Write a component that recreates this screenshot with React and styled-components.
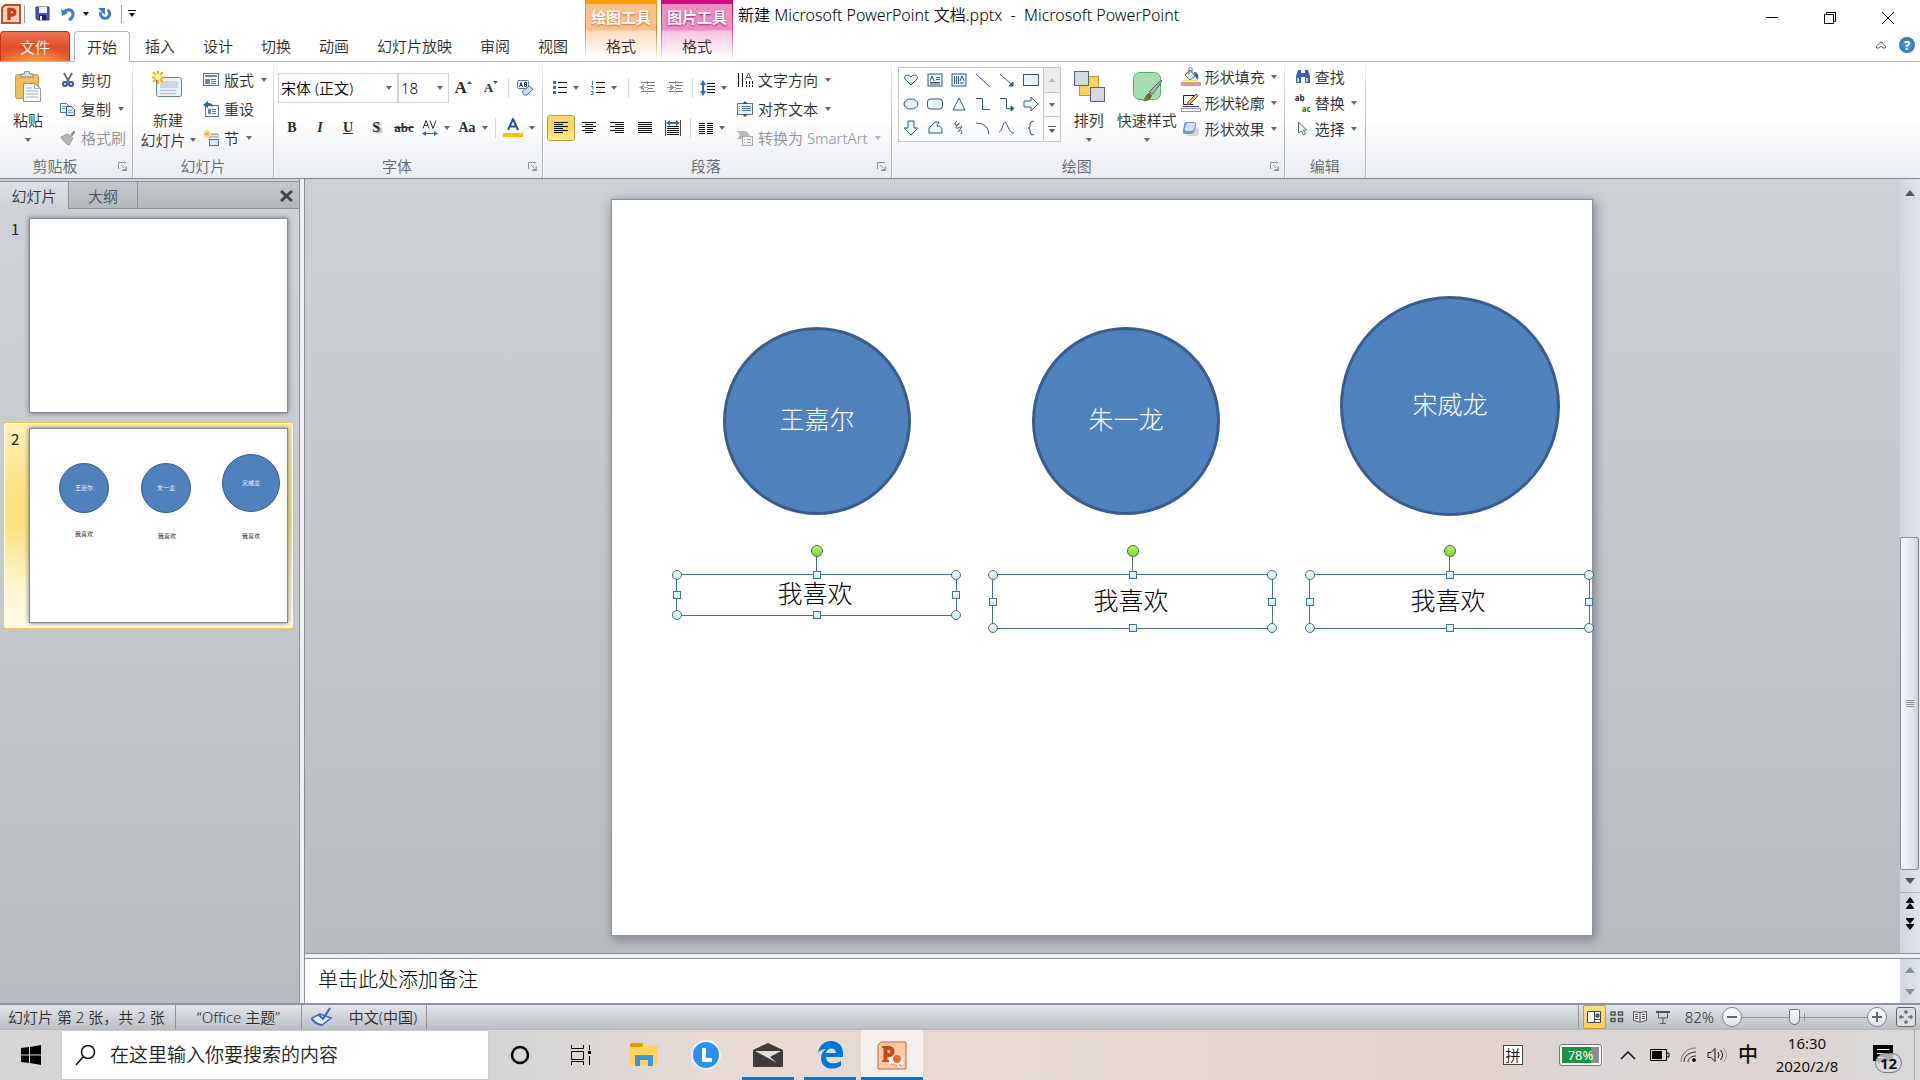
import React from 'react';
import styled, { createGlobalStyle, css } from 'styled-components';

const SHAPES = [
  { name: '王嘉尔', left: 111, top: 127, size: 188 },
  { name: '朱一龙', left: 420, top: 127, size: 188 },
  { name: '宋威龙', left: 728, top: 96, size: 220 },
];

const BOXES = [
  { text: '我喜欢', left: 64, top: 374, width: 281, height: 42 },
  { text: '我喜欢', left: 380, top: 374, width: 281, height: 55 },
  { text: '我喜欢', left: 697, top: 374, width: 281, height: 55 },
];

const HANDLES = [
  ['0%', '0%', true],
  ['50%', '0%', false],
  ['100%', '0%', true],
  ['0%', '50%', false],
  ['100%', '50%', false],
  ['0%', '100%', true],
  ['50%', '100%', false],
  ['100%', '100%', true],
];

function App() {
  return (
    <Page>
      <GlobalStyle />
      <Header />
      <Ribbon />
      <Workspace>
        <SlidePanel />
        <Editor />
      </Workspace>
      <StatusBar />
      <Taskbar />
    </Page>
  );
}

export default App;

/* ---------- header ---------- */

function Header() {
  return (
    <HeaderBar>
      <HeaderLeft>
        <QuickAccess>
          <svg width="20" height="20" viewBox="0 0 20 20">
            <path d="M4 1h15v18H1V4z" fill="#fbd3c2" stroke="#d24a1c" strokeWidth="2" />
            <path d="M8 16V5.500h3a2.500 2.500 0 0 1 0 5.500H8" fill="none" stroke="#c8400f" strokeWidth="3.500" />
          </svg>
          <QuickDivider />
          <QuickButton $w={28} aria-label="保存">
            <svg width="15" height="15" viewBox="0 0 15 15">
              <path d="M1 1h13v13H2.500L1 12.500z" fill="#4a50b8" stroke="#2f3590" />
              <rect x="4" y="1" width="8" height="6" fill="#f2f5ff" />
              <rect x="4" y="9" width="7" height="5" fill="#20245c" />
              <rect x="5" y="10" width="2" height="4" fill="#fff" />
            </svg>
          </QuickButton>
          <QuickButton $w={24} aria-label="撤消">
            <svg width="14" height="14" viewBox="0 0 14 14">
              <path d="M3 5c4-4 9-2 9 2 0 3-2 5-4 6" fill="none" stroke="#3d78cf" strokeWidth="3" />
              <path d="M0 2l1 7 6-3z" fill="#3d78cf" />
            </svg>
          </QuickButton>
          <QuickButton $w={12} aria-label="撤消列表">
            <Caret $dark />
          </QuickButton>
          <QuickButton $w={26} aria-label="重复">
            <svg width="14" height="14" viewBox="0 0 14 14">
              <path d="M9.500 3A4.500 4.500 0 1 1 3 5" fill="none" stroke="#3d78cf" strokeWidth="3" />
              <path d="M0 1h7v7z" fill="#3d78cf" />
            </svg>
          </QuickButton>
          <QuickDivider />
          <QuickButton $w={14} aria-label="自定义快速访问工具栏">
            <svg width="8" height="7" viewBox="0 0 8 7">
              <path d="M0 0h8v1H0zM1 3h6L4 7z" fill="#111" />
            </svg>
          </QuickButton>
        </QuickAccess>
        <Tabs>
          <FileTab>文件</FileTab>
          <Tab $active>开始</Tab>
          <Tab>插入</Tab>
          <Tab>设计</Tab>
          <Tab>切换</Tab>
          <Tab>动画</Tab>
          <Tab>幻灯片放映</Tab>
          <Tab>审阅</Tab>
          <Tab>视图</Tab>
        </Tabs>
      </HeaderLeft>
      <ContextGroup $main="#ff9c00" $edge="#e08a2c" $top="#fdc08c" $mid="#fedcc0">
        <ContextTitle $shadow="#c96a1c">绘图工具</ContextTitle>
        <ContextTab>格式</ContextTab>
      </ContextGroup>
      <ContextGroup $main="#cf0a80" $edge="#dc4fa4" $top="#ee8fc4" $mid="#f8c2e0">
        <ContextTitle $shadow="#b01c6c">图片工具</ContextTitle>
        <ContextTab>格式</ContextTab>
      </ContextGroup>
      <HeaderRight>
        <TitleRow>
          <Title>新建 Microsoft PowerPoint 文档.pptx&nbsp; -&nbsp; Microsoft PowerPoint</Title>
          <WindowButton aria-label="最小化">
            <svg width="12" height="12" viewBox="0 0 12 12">
              <path d="M0 5.500h12" stroke="#000" />
            </svg>
          </WindowButton>
          <WindowButton aria-label="还原">
            <svg width="12" height="12" viewBox="0 0 12 12" fill="none" stroke="#000">
              <path d="M.5 2.500h9v9h-9zM2.500 2.500v-2h9v9h-2" />
            </svg>
          </WindowButton>
          <WindowButton aria-label="关闭">
            <svg width="12" height="12" viewBox="0 0 12 12" stroke="#000">
              <path d="M0 0l12 12M12 0L0 12" />
            </svg>
          </WindowButton>
        </TitleRow>
        <HelpRow>
          <BareButton aria-label="功能区最小化">
            <svg width="10" height="8" viewBox="0 0 10 8" fill="#fff" stroke="#555a60">
              <path d="M.5 5L5 .7 9.500 5v2H7L5 5 3 7H.5z" />
            </svg>
          </BareButton>
          <HelpButton aria-label="帮助">?</HelpButton>
        </HelpRow>
      </HeaderRight>
    </HeaderBar>
  );
}

/* ---------- ribbon ---------- */

function Lines({ rows, x = 0, color = '#111' }) {
  return rows.map(([x1, x2, y]) => (
    <path key={y} d={`M${x + x1} ${y + 0.5}H${x + x2}`} stroke={color} />
  ));
}

function AlignIcon({ starts, ends }) {
  return (
    <svg width="15" height="13" viewBox="0 0 15 13">
      <Lines rows={[0, 2, 4, 6, 8, 10].map((y, i) => [starts[i % 2], ends[i % 2], y])} />
    </svg>
  );
}

function IndentIcon({ right }) {
  return (
    <svg width="16" height="14" viewBox="0 0 16 14">
      <Lines rows={[[2, 16, 1], [9, 16, 4], [9, 14, 7], [2, 16, 10]]} color="#777" />
      <path d={right ? 'M3 3l5 3.500L3 10zM0 6h4v1H0z' : 'M5 3L0 6.500 5 10zM4 6h4v1H4z'} fill="#a0a0a0" />
      <path d="M8.500 0v14" stroke="#888" strokeDasharray="1 1" />
    </svg>
  );
}

function SmallCommand({ icon, label, caret, disabled, tall }) {
  return (
    <CommandButton $tall={tall} disabled={disabled}>
      {icon}
      {label}
      {caret && <Caret $faint={disabled} />}
    </CommandButton>
  );
}

function Launcher() {
  return (
    <LauncherButton aria-label="更多选项">
      <svg width="9" height="9" viewBox="0 0 9 9" fill="none" stroke="#8c9096">
        <path d="M.5 7V.5H8M3 3l3 3" />
        <path d="M4 8.500h5V4M5 7.500h3V5" />
      </svg>
    </LauncherButton>
  );
}

function Ribbon() {
  return (
    <RibbonBar>
      <Group>
        <GroupBody>
          <LargeButton $w={56}>
            <svg width="26" height="32" viewBox="0 0 26 32">
              <rect x=".5" y="3.500" width="23" height="24" rx="2" fill="#f0bd5c" stroke="#cf9a3b" />
              <path d="M6 6V3h3a3 3 0 0 1 6 0h3v3z" fill="#d9dce2" stroke="#80858c" />
              <path d="M8.500 12.500h11l6 5v13h-17z" fill="#fafcff" stroke="#8095b5" />
              <path d="M19.500 12.500v5h6M11 17h6M11 20h12M11 23h12M11 26h12" fill="none" stroke="#9fb0cc" />
            </svg>
            <span>粘贴</span>
            <LineCaret><Caret /></LineCaret>
          </LargeButton>
          <Column $pad>
            <SmallCommand
              tall
              label="剪切"
              icon={
                <svg width="16" height="16" viewBox="0 0 16 16" fill="none">
                  <path d="M4 1l5 9M12 1L7 10" stroke="#66748a" strokeWidth="2" />
                  <circle cx="5" cy="12" r="2" stroke="#2b59a8" strokeWidth="2" />
                  <circle cx="11" cy="12" r="2" stroke="#2b59a8" strokeWidth="2" />
                </svg>
              }
            />
            <SmallCommand
              tall
              caret
              label="复制"
              icon={
                <svg width="16" height="16" viewBox="0 0 16 16">
                  <path d="M.5 2.500h6l3 3v6h-9z" fill="#fff" stroke="#4a74b8" />
                  <path d="M6.500 5.500h5l3 3v6h-8z" fill="#dfeafc" stroke="#2e5ca8" />
                  <path d="M2 5.500h4M2 7.500h4M8 9.500h4M8 11.500h5" stroke="#7f9fd0" />
                </svg>
              }
            />
            <SmallCommand
              tall
              disabled
              label="格式刷"
              icon={
                <svg width="16" height="16" viewBox="0 0 16 16">
                  <path d="M11 4l3-3 1 1-3 4z" fill="#8b8b8b" stroke="#8b8b8b" />
                  <path d="M1 7l7-3 5 4-4 7c-3-1-6-4-8-8z" fill="#b4b4b4" stroke="#9a9a9a" />
                </svg>
              }
            />
          </Column>
        </GroupBody>
        <GroupLabel $launcher>剪贴板<Launcher /></GroupLabel>
      </Group>

      <Group>
        <GroupBody $pad={4}>
          <LargeButton $w={62}>
            <svg width="32" height="32" viewBox="0 0 32 32">
              <rect x="4.500" y="6.500" width="25" height="19" rx="2" fill="#edf2f9" stroke="#6b7d9c" />
              <rect x="8" y="10" width="18" height="7" fill="#cfd6e2" />
              <path d="M8 19.500h18M8 22.500h18" stroke="#a9b8d2" strokeDasharray="16 2" />
              <path d="M6 0v13M0 6.500h13M1 1l10 10M11 1L1 11" stroke="#f0b400" strokeWidth="2" />
              <circle cx="6" cy="6" r="3" fill="#fff6a8" />
            </svg>
            <span>新建</span>
            <LineCaret>幻灯片<Caret /></LineCaret>
          </LargeButton>
          <Column $pad>
            <SmallCommand
              tall
              caret
              label="版式"
              icon={
                <svg width="16" height="16" viewBox="0 0 16 16">
                  <rect x=".5" y="1.500" width="15" height="12" fill="#f4f7fc" stroke="#60718e" />
                  <path d="M2 3h12v2H2zM2 7h5v5H2z" fill="#6f87b0" />
                  <path d="M8 7.500h5M8 9.500h5M8 11.500h5" stroke="#60718e" />
                </svg>
              }
            />
            <SmallCommand
              tall
              label="重设"
              icon={
                <svg width="16" height="16" viewBox="0 0 16 16">
                  <rect x="2.500" y="4.500" width="13" height="11" fill="#f4f7fc" stroke="#60718e" />
                  <path d="M5 8h3v5H5z" fill="#6f87b0" />
                  <path d="M9 8.500h4M9 10.500h4M9 12.500h4" stroke="#60718e" />
                  <path d="M0 4l5-4v2c4 0 5 2 5 4-2-2-3-1-5-1v2z" fill="#2f62bd" />
                </svg>
              }
            />
            <SmallCommand
              tall
              caret
              label="节"
              icon={
                <svg width="16" height="16" viewBox="0 0 16 16">
                  <path d="M8 4h7v3H6" fill="#dfe3ea" stroke="#8b95a5" />
                  <rect x="6.500" y="9.500" width="9" height="6" fill="#d9e4f5" stroke="#60718e" />
                  <path d="M4 0v8M0 4h8M1 1l6 6M7 1L1 7" stroke="#f0b400" />
                </svg>
              }
            />
          </Column>
        </GroupBody>
        <GroupLabel>幻灯片</GroupLabel>
      </Group>

      <Group>
        <ToolRows>
          <ToolRow>
            <Combo $w={120}>
              <select aria-label="字体" defaultValue="宋体 (正文)">
                <option>宋体 (正文)</option>
              </select>
              <Caret />
            </Combo>
            <Combo $w={51}>
              <select aria-label="字号" defaultValue="18">
                <option>18</option>
              </select>
              <Caret />
            </Combo>
            <Tool $size={17} aria-label="增大字号">
              A
              <svg width="5" height="14" viewBox="0 0 5 14"><path d="M0 3l2.500-3L5 3z" fill="#2c5aa8" /></svg>
            </Tool>
            <Tool $size={13} aria-label="减小字号">
              A
              <svg width="5" height="14" viewBox="0 0 5 14"><path d="M0 0l2.500 3L5 0z" fill="#2c5aa8" /></svg>
            </Tool>
            <Divider />
            <Tool aria-label="清除格式">
              <svg width="17" height="16" viewBox="0 0 17 16">
                <rect x=".5" y=".5" width="11" height="8" rx="1" fill="#fff" stroke="#5873a3" />
                <path d="M2.500 7L4 2.500 5.500 7M3 5.500h2M7.500 2.500v4h2v-2h-2 2v-2z" fill="none" stroke="#333" />
                <path d="M5 12l7-6 4 3-6 6H7z" fill="#cfdcf0" stroke="#5873a3" />
              </svg>
            </Tool>
          </ToolRow>
          <ToolRow>
            <Tool $size={14}><b>B</b></Tool>
            <Tool $size={14}><i>I</i></Tool>
            <Tool $size={14}><u>U</u></Tool>
            <Tool $size={14}><Shadowed>S</Shadowed></Tool>
            <Tool $size={13}><s>abc</s></Tool>
            <Tool $w={36} aria-label="字符间距">
              <svg width="16" height="17" viewBox="0 0 16 17">
                <path d="M1 8.500l3-8 3 8M2 5.500h4M8 .5l3 8 3-8" fill="none" stroke="#333" />
                <path d="M0 13.500L4 11v2h8v-2l4 2.500-4 2.500v-2H4v2z" fill="#3367b8" />
              </svg>
              <Caret />
            </Tool>
            <Tool $w={38} $size={14}>Aa<Caret /></Tool>
            <Divider />
            <Tool $w={42} aria-label="字体颜色">
              <svg width="20" height="20" viewBox="0 0 20 20">
                <path d="M5 12L10 1l5 11M7 8.500h6" fill="none" stroke="#2c4d90" strokeWidth="2" />
                <rect y="15" width="20" height="4" fill="#ffc000" />
              </svg>
              <Caret />
            </Tool>
          </ToolRow>
        </ToolRows>
        <GroupLabel $launcher>字体<Launcher /></GroupLabel>
      </Group>

      <Group>
        <GroupBody $end={4}>
          <ToolRows>
            <ToolRow>
              <Tool $w={38} aria-label="项目符号">
                <svg width="14" height="14" viewBox="0 0 14 14">
                  <Lines rows={[[5, 14, 1], [5, 14, 6], [5, 14, 11]]} />
                  <path d="M0 0h3v3H0zM0 5h3v3H0zM0 10h3v3H0z" fill="#3a68b5" />
                </svg>
                <Caret />
              </Tool>
              <Tool $w={38} aria-label="编号">
                <svg width="14" height="14" viewBox="0 0 14 14">
                  <Lines rows={[[5, 14, 1], [5, 14, 6], [5, 14, 11]]} />
                  <path d="M1.500 0v4M0 5.500h2v3M0 10.500h2v3H0" fill="none" stroke="#3a68b5" />
                </svg>
                <Caret />
              </Tool>
              <Divider $w={10} />
              <Tool aria-label="减少缩进量"><IndentIcon /></Tool>
              <Tool aria-label="增加缩进量"><IndentIcon right /></Tool>
              <Divider />
              <Tool $w={36} aria-label="行距">
                <svg width="15" height="16" viewBox="0 0 15 16">
                  <Lines rows={[[7, 15, 3], [7, 15, 6], [7, 15, 9], [7, 15, 12]]} />
                  <path d="M0 5l3-5 3 5H4v6h2l-3 5-3-5h2V5z" fill="#3a68b5" />
                </svg>
                <Caret />
              </Tool>
            </ToolRow>
            <ToolRow>
              <Tool $active aria-label="左对齐"><AlignIcon starts={[0, 0]} ends={[14, 9]} /></Tool>
              <Tool aria-label="居中"><AlignIcon starts={[0, 3]} ends={[14, 11]} /></Tool>
              <Tool aria-label="右对齐"><AlignIcon starts={[0, 5]} ends={[14, 14]} /></Tool>
              <Tool aria-label="两端对齐"><AlignIcon starts={[0, 0]} ends={[14, 14]} /></Tool>
              <Tool aria-label="分散对齐">
                <svg width="16" height="16" viewBox="0 0 16 16">
                  <path d="M.5 0v16M15.500 0v16" stroke="#444" />
                  <path d="M1 3l4-3v2h6V0l4 3-4 3V4H5v2z" fill="#3a68b5" />
                  <Lines rows={[[2, 14, 6], [2, 14, 8], [2, 14, 10], [2, 14, 12], [2, 14, 14]]} />
                </svg>
              </Tool>
              <Divider />
              <Tool $w={38} aria-label="分栏">
                <svg width="14" height="11" viewBox="0 0 14 11">
                  <Lines rows={[[0, 6, 0], [0, 6, 2], [0, 6, 4], [0, 6, 6], [0, 6, 8], [0, 6, 10]]} />
                  <Lines x={8} rows={[[0, 6, 0], [0, 6, 2], [0, 6, 4], [0, 6, 6], [0, 6, 8], [0, 6, 10]]} />
                </svg>
                <Caret />
              </Tool>
            </ToolRow>
          </ToolRows>
          <Column $pad>
            <SmallCommand
              tall
              caret
              label="文字方向"
              icon={
                <svg width="16" height="16" viewBox="0 0 16 16">
                  <path d="M1.500 1v14M5.500 1v14" stroke="#111" />
                  <path d="M9.500 9v6M12.500 9v6M15.500 9v6" stroke="#111" strokeDasharray="3 1" />
                  <path d="M8.500 7.500L11.500 1l3 6.500M9.500 5.500h4" fill="none" stroke="#2c4d90" />
                </svg>
              }
            />
            <SmallCommand
              tall
              caret
              label="对齐文本"
              icon={
                <svg width="16" height="16" viewBox="0 0 16 16">
                  <rect x=".5" y="2.500" width="15" height="11" fill="#e8f0fc" stroke="#5873a3" />
                  <path d="M2 5.500h1M5 5.500h9M2 7.500h1M5 7.500h9M2 9.500h1M5 9.500h9" stroke="#5873a3" />
                  <path d="M5 3l3-3 3 3zM5 13l3 3 3-3z" fill="#2456ab" />
                </svg>
              }
            />
            <SmallCommand
              tall
              caret
              disabled
              label="转换为 SmartArt"
              icon={
                <svg width="16" height="16" viewBox="0 0 16 16">
                  <path d="M0 1h9l4 4-4 4H0l3-4z" fill="#b9b9b9" />
                  <rect x="5.500" y="6.500" width="10" height="9" fill="#f3f3f3" stroke="#a5a5a5" />
                  <path d="M7 9.500h1M10 9.500h4M7 12.500h1M10 12.500h4" stroke="#a5a5a5" />
                </svg>
              }
            />
          </Column>
        </GroupBody>
        <GroupLabel $launcher>段落<Launcher /></GroupLabel>
      </Group>

      <Group>
        <GroupBody $pad={6} $end={1}>
          <Gallery>
            <GalleryGrid>
              {GALLERY.map((shape, i) => (
                <BareButton key={i} aria-label={`形状 ${i + 1}`}>
                  <svg width="16" height="16" viewBox="0 0 16 16" fill="#e9f4fc" stroke="#33567f">
                    {shape}
                  </svg>
                </BareButton>
              ))}
            </GalleryGrid>
            <GalleryScroll>
              <GalleryButton $off aria-label="上一行"><Caret $up $faint /></GalleryButton>
              <GalleryButton aria-label="下一行"><Caret /></GalleryButton>
              <GalleryButton aria-label="其他">
                <svg width="8" height="7" viewBox="0 0 8 7"><path d="M0 0h8v1H0zM1 3h6L4 7z" fill="#555" /></svg>
              </GalleryButton>
            </GalleryScroll>
          </Gallery>
          <LargeButton $w={56}>
            <svg width="32" height="32" viewBox="0 0 32 32">
              <rect x="6.500" y="5.500" width="19" height="19" fill="#f7d560" stroke="#c09c2e" />
              <rect x="1.500" y=".5" width="14" height="14" fill="#d5dae2" stroke="#59616e" />
              <rect x="17.500" y="16.500" width="14" height="14" fill="#d5dae2" stroke="#59616e" />
            </svg>
            <span>排列</span>
            <LineCaret><Caret /></LineCaret>
          </LargeButton>
          <LargeButton $w={60}>
            <svg width="32" height="32" viewBox="0 0 32 32">
              <rect x="2.500" y="1.500" width="27" height="27" rx="6" fill="#a5dfb0" stroke="#4fae68" />
              <path d="M31 10l-9 13-4-2L30 9z" fill="#aab0b8" stroke="#666" />
              <path d="M21 24c-1 5-5 7-9 6 2-2 2-6 6-8z" fill="#7a5a35" />
              <path d="M12 30c2-1 3-3 4-5l2 4z" fill="#3c9a3c" />
            </svg>
            <span>快速样式</span>
            <LineCaret><Caret /></LineCaret>
          </LargeButton>
          <Column>
            <SmallCommand
              caret
              label="形状填充"
              icon={
                <svg width="20" height="20" viewBox="0 0 20 20">
                  <path d="M4 8l5-5 5 6-5 4z" fill="#dbe6f5" stroke="#45618e" />
                  <path d="M8 7V2c0-2 3-2 3 0v3" fill="none" stroke="#45618e" />
                  <path d="M13 5c4 0 5 4 4 8l-3-4z" fill="#2d5dae" />
                  <path d="M2 13.500h15" stroke="#f5ea3a" />
                  <rect y="15" width="20" height="4" fill="#dc9a98" />
                </svg>
              }
            />
            <SmallCommand
              caret
              label="形状轮廓"
              icon={
                <svg width="20" height="20" viewBox="0 0 20 20">
                  <path d="M13 2.500H2.500v9h10" fill="none" stroke="#222" />
                  <path d="M7 9l8-8 2 2-8 8-3 1z" fill="#eab66a" stroke="#7a4a2a" />
                  <path d="M2 13.500h16" stroke="#3434c8" />
                  <rect x=".5" y="15.500" width="19" height="3" fill="#fff" stroke="#999" />
                </svg>
              }
            />
            <SmallCommand
              caret
              label="形状效果"
              icon={
                <svg width="20" height="20" viewBox="0 0 20 20">
                  <rect x="5" y="8" width="13" height="9" rx="3" fill="#d5d5d5" />
                  <path d="M5 3h8q3 0 2 4l-2 6q-1 2-3 2H4q-3 0-2-4l1-5q0-3 2-3z" fill="#6f95d4" />
                  <path d="M6 4h7q2 0 1 2l-1 4q-1 2-3 2H6q-3 0-2-3z" fill="#d3e2f8" />
                </svg>
              }
            />
          </Column>
        </GroupBody>
        <GroupLabel $launcher>绘图<Launcher /></GroupLabel>
      </Group>

      <Group>
        <GroupBody $pad={6} $end={2}>
          <Column>
            <SmallCommand
              label="查找"
              icon={
                <svg width="16" height="16" viewBox="0 0 16 16">
                  <path d="M3 1h3v3h4V1h3l2 6v7h-5V8H6v6H1V7z" fill="#3a62a8" />
                  <path d="M2 9h2v4H2zM11 9h2v4h-2z" fill="#c5d6f0" />
                </svg>
              }
            />
            <SmallCommand caret label="替换" icon={<ReplaceIcon><span>ab</span><em>ac</em></ReplaceIcon>} />
            <SmallCommand
              caret
              label="选择"
              icon={
                <svg width="16" height="16" viewBox="0 0 16 16">
                  <path d="M3.500 1v11l3-2 2 4 2-1-2-4h3z" fill="#f3f7fc" stroke="#54698c" />
                </svg>
              }
            />
          </Column>
        </GroupBody>
        <GroupLabel>编辑</GroupLabel>
      </Group>
    </RibbonBar>
  );
}

const GALLERY = [
  <path d="M8 13L2 7c-2-3 3-6 6-2 3-4 8-1 6 2z" />,
  <g><rect x="1" y="2" width="14" height="12" /><path d="M3 9l2-5 2 5M9 5.500h4M9 7.500h4M3 10.500h10M3 12h10" fill="none" /></g>,
  <g><rect x="1" y="2" width="14" height="12" /><path d="M9 9l2-5 2 5M3.500 4v8M5.500 4v8M7.500 4v8M10 10v2M12 10v2" fill="none" /></g>,
  <path d="M1 2l14 13" fill="none" />,
  <g><path d="M1 2l12 11" fill="none" /><path d="M14 10v4h-4z" fill="#33567f" /></g>,
  <rect x=".5" y="2.500" width="15" height="11" />,
  <ellipse cx="8" cy="8" rx="7" ry="5" />,
  <rect x=".5" y="3" width="15" height="10" rx="3" />,
  <path d="M8 2l6 12H2z" />,
  <path d="M1 2.500h6.500v11H15" fill="none" />,
  <g><path d="M1 2.500h6.500v10H12" fill="none" /><path d="M12 10l3 2.500-3 2.500z" fill="#33567f" /></g>,
  <path d="M1 5h7V1l7 7-7 7v-4H1z" />,
  <path d="M5 1h6v7h4l-7 7-7-7h4z" />,
  <path d="M2 13V8l6-6h4l-2 4q5 0 5 4v3z" />,
  <path d="M6 1C3 3 3 6 6 5s3-3 1-1-3 5 0 4 5-3 3 0-4 4-2 3 4 0 2 3" fill="none" />,
  <path d="M1 3q12 0 13 11" fill="none" />,
  <path d="M0 12C3 12 4 2 6 2s4 12 9 11" fill="none" />,
  <path d="M11 1q-4 0-4 3v2q0 2-2 2 2 0 2 2v2q0 3 4 3" fill="none" />,
];

/* ---------- slides ---------- */

function SlideContent({ scale = 1, selected }) {
  const px = (n) => `${Math.round(n * scale)}px`;
  return (
    <>
      {SHAPES.map((s) => (
        <Circle
          key={s.name}
          $thin={scale < 1}
          style={{ left: px(s.left), top: px(s.top), width: px(s.size), height: px(s.size) }}
        >
          {s.name}
        </Circle>
      ))}
      {BOXES.map((b) => (
        <TextBox
          key={b.left}
          $selected={selected}
          style={{ left: px(b.left), top: px(b.top), width: px(b.width), height: px(b.height) }}
        >
          {b.text}
          {selected && <RotateHandle />}
          {selected && HANDLES.map(([x, y, round]) => <Handle key={x + y} $x={x} $y={y} $round={round} />)}
        </TextBox>
      ))}
    </>
  );
}

function SlidePanel() {
  return (
    <Panel>
      <PanelTabs>
        <PanelTab $active>幻灯片</PanelTab>
        <PanelTab>大纲</PanelTab>
        <PanelClose aria-label="关闭">
          <svg width="13" height="12" viewBox="0 0 13 12" stroke="#444" strokeWidth="3">
            <path d="M1 1l11 10M12 1L1 11" />
          </svg>
        </PanelClose>
      </PanelTabs>
      <ThumbList>
        <ThumbItem>
          <ThumbNumber>1</ThumbNumber>
          <Thumb />
        </ThumbItem>
        <ThumbItem $selected>
          <ThumbNumber>2</ThumbNumber>
          <Thumb>
            <SlideContent scale={0.264} />
          </Thumb>
        </ThumbItem>
      </ThumbList>
    </Panel>
  );
}

function Editor() {
  return (
    <EditorColumn>
      <CanvasRow>
        <Canvas>
          <Slide>
            <SlideContent selected />
          </Slide>
        </Canvas>
        <ScrollBar>
          <ScrollButton aria-label="向上滚动"><Triangle $up $color="#555" /></ScrollButton>
          <ScrollTrack>
            <ScrollThumb />
          </ScrollTrack>
          <ScrollButton aria-label="向下滚动"><Triangle $color="#555" /></ScrollButton>
          <SlideJump>
            <BareButton aria-label="上一张幻灯片">
              <svg width="10" height="13" viewBox="0 0 10 13"><path d="M1 5l4-5 4 5v1H1zM1 11l4-5 4 5v1H1z" /></svg>
            </BareButton>
            <BareButton aria-label="下一张幻灯片">
              <svg width="10" height="13" viewBox="0 0 10 13"><path d="M1 1h8v1L5 7 1 2zM1 7h8v1l-4 5-4-5z" /></svg>
            </BareButton>
          </SlideJump>
        </ScrollBar>
      </CanvasRow>
      <NotesRow>
        <Notes aria-label="备注" placeholder="单击此处添加备注" />
        <ScrollBar $short>
          <ScrollButton aria-label="备注向上滚动"><Triangle $up $color="#87938f" /></ScrollButton>
          <ScrollButton aria-label="备注向下滚动"><Triangle $color="#87938f" /></ScrollButton>
        </ScrollBar>
      </NotesRow>
    </EditorColumn>
  );
}

/* ---------- status bar ---------- */

function StatusBar() {
  return (
    <Status>
      <StatusItem $w={176}>幻灯片 第 2 张，共 2 张</StatusItem>
      <StatusItem $w={126} $center>“Office 主题”</StatusItem>
      <StatusItem $w={125} $center>
        <svg width="22" height="20" viewBox="0 0 22 20">
          <path d="M1 11l8-4 11 4-9 7q-5 0-10-5z" fill="#e6eefc" stroke="#3b69b8" strokeWidth="1.500" />
          <path d="M1 12q4 5 10 6" fill="none" stroke="#3b69b8" strokeWidth="2" />
          <path d="M8 8l4 4 7-11" fill="none" stroke="#3560c0" strokeWidth="2" />
        </svg>
        中文(中国)
      </StatusItem>
      <Spacer />
      <ViewButtons>
        <ViewButton $active aria-label="普通视图">
          <svg width="14" height="12" viewBox="0 0 14 12" fill="#fff" stroke="#444">
            <path d="M.5.5h13v11H.5zM7.500 0v12M7.500 8.500h6" />
            <path d="M9 3h3v3H9z" fill="#666" />
          </svg>
        </ViewButton>
        <ViewButton aria-label="幻灯片浏览">
          <svg width="14" height="12" viewBox="0 0 14 12" fill="none" stroke="#555" strokeWidth="1.500">
            <path d="M1 1h4v3H1zM8.500 1h4v3h-4zM1 7.500h4v3H1zM8.500 7.500h4v3h-4z" />
          </svg>
        </ViewButton>
        <ViewButton aria-label="阅读视图">
          <svg width="14" height="12" viewBox="0 0 14 12" fill="#eee" stroke="#555">
            <path d="M7 1.500L.5.5v9L7 11l6.500-1.500v-9L7 1.500V11" />
            <path d="M2 3.500h3M2 5.500h3M2 7.500h3M9 3.500h3M9 5.500h3M9 7.500h3" />
          </svg>
        </ViewButton>
        <ViewButton aria-label="幻灯片放映">
          <svg width="14" height="13" viewBox="0 0 14 13" fill="none" stroke="#555">
            <path d="M0 1h14" strokeWidth="2" />
            <path d="M2.500 2v5h9V2M7 7v5M4 12.500h6" />
          </svg>
        </ViewButton>
      </ViewButtons>
      <ZoomLabel>82%</ZoomLabel>
      <RoundButton aria-label="缩小">
        <svg width="10" height="10" viewBox="0 0 10 10"><path d="M0 5h10" stroke="#666" strokeWidth="2" /></svg>
      </RoundButton>
      <ZoomSlider type="range" aria-label="显示比例" min="0" max="100" defaultValue="41" />
      <RoundButton aria-label="放大">
        <svg width="10" height="10" viewBox="0 0 10 10"><path d="M0 5h10M5 0v10" stroke="#666" strokeWidth="2" /></svg>
      </RoundButton>
      <FitButton aria-label="适应窗口">
        <svg width="16" height="16" viewBox="0 0 16 16" fill="none" stroke="#444">
          <path d="M8 1v4M6 3h4M8 11v4M6 13h4M1 8h5M3 6v4M10 8h5M13 6v4" />
        </svg>
      </FitButton>
    </Status>
  );
}

/* ---------- taskbar ---------- */

function Taskbar() {
  return (
    <TaskbarRow>
      <StartButton aria-label="开始">
        <svg width="20" height="20" viewBox="0 0 20 20">
          <path d="M0 3l8-1v7.500H0zM9 2l11-2v9.500H9zM0 10.500h8V18l-8-1zM9 10.500h11V20L9 18z" />
        </svg>
      </StartButton>
      <SearchBox htmlFor="search">
        <svg width="22" height="22" viewBox="0 0 22 22" fill="none" stroke="#111" strokeWidth="1.500">
          <circle cx="13" cy="8" r="6.500" />
          <path d="M8 13l-7 8" />
        </svg>
        <input id="search" type="text" aria-label="搜索" placeholder="在这里输入你要搜索的内容" />
      </SearchBox>
      <TaskButton aria-label="Cortana">
        <svg width="20" height="20" viewBox="0 0 20 20" fill="none" stroke="#000" strokeWidth="2.500">
          <circle cx="10" cy="10" r="8" />
        </svg>
      </TaskButton>
      <TaskButton aria-label="任务视图">
        <svg width="24" height="20" viewBox="0 0 24 20" fill="none" stroke="#000">
          <path d="M1.500 0v3.500h12V0M1.500 6.500h12v8h-12zM1.500 20v-3.500h12V20M19.500 0v5M19.500 11v9" />
          <path d="M18 6h3v3h-3z" fill="#000" stroke="none" />
        </svg>
      </TaskButton>
      <TaskButton aria-label="文件资源管理器">
        <svg width="28" height="24" viewBox="0 0 28 24">
          <path d="M0 2q0-2 2-2h10q2 0 2 2h12q2 0 2 2v18H0z" fill="#ffd25c" />
          <path d="M0 2q0-2 2-2h10q1 0 1 2t-3 2H0z" fill="#e0a000" />
          <path d="M5 23V12h18v11h-5v-6h-8v6z" fill="#3a96dd" />
        </svg>
      </TaskButton>
      <TaskButton aria-label="时钟">
        <svg width="30" height="30" viewBox="0 0 30 30">
          <circle cx="15" cy="15" r="14" fill="#2b91ee" stroke="#e8f2fb" strokeWidth="2" />
          <path d="M13 8v12h8" fill="none" stroke="#fff" strokeWidth="4" />
        </svg>
      </TaskButton>
      <TaskButton $open aria-label="邮件">
        <svg width="30" height="24" viewBox="0 0 30 24">
          <path d="M0 7l15-7 15 7v17H0z" fill="#3f3b3a" />
          <path d="M2 8h26l-11 6 7 6-9-5z" fill="#e8dcd6" />
        </svg>
      </TaskButton>
      <TaskButton $open aria-label="Microsoft Edge">
        <svg width="26" height="28" viewBox="0 0 26 28">
          <path
            d="M1 12C2 4 8 0 14 0c8 0 12 6 12 12v4H9c0 7 9 8 15 4v5c-8 5-20 3-20-8 0-4 2-7 5-9-4 0-7 2-8 4zm8 0h10c0-6-9-6-10 0z"
            fill="#0078d7"
            fillRule="evenodd"
          />
        </svg>
      </TaskButton>
      <TaskButton $open $active aria-label="PowerPoint">
        <svg width="30" height="29" viewBox="0 0 30 29">
          <path d="M4 1h24q1 0 1 1v25q0 1-1 1H2q-1 0-1-1V4z" fill="#fbc9a8" stroke="#c9622f" />
          <path d="M13 14l15 2-3 11-14-4z" fill="#fff" stroke="#f3d3c3" />
          <circle cx="20" cy="18" r="4" fill="#ee6c33" />
          <path d="M14 23l6 2M22 24l3 1" stroke="#f0a27c" strokeWidth="2" />
          <path d="M8.500 20V7H12a3.500 3.500 0 0 1 0 7H8.500" fill="none" stroke="#c8480f" strokeWidth="4" />
          <path d="M5 6h4M5 20h7" stroke="#c8480f" strokeWidth="2" />
        </svg>
      </TaskButton>
      <Spacer />
      <Tray>
        <ImeMode aria-label="拼音">拼</ImeMode>
        <BatteryGauge>
          <BatteryLevel>78%</BatteryLevel>
        </BatteryGauge>
        <BareButton aria-label="显示隐藏的图标">
          <svg width="20" height="10" viewBox="0 0 20 10" fill="none" stroke="#111" strokeWidth="1.500"><path d="M1 9l7-7 7 7" /></svg>
        </BareButton>
        <BareButton aria-label="电池">
          <svg width="20" height="12" viewBox="0 0 20 12">
            <path d="M.5.5h16v11H.5zM17 4h2v4h-2" fill="none" stroke="#000" />
            <rect x="2" y="2" width="10" height="8" />
          </svg>
        </BareButton>
        <BareButton aria-label="网络">
          <svg width="17" height="16" viewBox="0 0 17 16" fill="none" stroke="#222">
            <path d="M1 15C1 7 7 1 16 1" stroke="#777" />
            <path d="M4 15C4 9 9 5 16 5M8 15c0-4 4-6 8-6" />
            <circle cx="14" cy="13" r="1.500" fill="#000" />
          </svg>
        </BareButton>
        <BareButton aria-label="音量">
          <svg width="21" height="16" viewBox="0 0 21 16" fill="none" stroke="#111">
            <path d="M1 5.500h3l4-4v13l-4-4H1zM11 5q2 3 0 6M13.500 3q4 5 0 10" />
            <path d="M16.500 1q6 7 0 14" stroke="#999" />
          </svg>
        </BareButton>
        <ImeButton>中</ImeButton>
        <Clock>
          <span>16:30</span>
          <span>2020/2/8</span>
        </Clock>
        <Notifications aria-label="通知">
          <svg width="20" height="20" viewBox="0 0 20 20">
            <path d="M0 0h20v16H8l-3 3v-3H0z" />
            <path d="M4 4.500h12M4 8.500h12M4 12.500h6" stroke="#fff" />
          </svg>
          <Badge>12</Badge>
        </Notifications>
        <ShowDesktop aria-label="显示桌面" />
      </Tray>
    </TaskbarRow>
  );
}

/* ---------- styles ---------- */

const GlobalStyle = createGlobalStyle`
  * {
    box-sizing: border-box;
  }

  body {
    margin: 0;
    font-family: 'Noto Sans', 'Noto Sans CJK SC', sans-serif;
    font-size: 15px;
    font-weight: 350;
    line-height: 20px;
    color: #2b2b2b;
    background: #fff;
  }

  button, input, select, textarea {
    font: inherit;
    color: inherit;
  }

  svg {
    display: block;
    flex-shrink: 0;
  }
`;

const SONG = `'Liberation Serif', 'Noto Sans CJK SC', serif`;

const Page = styled.div`
  display: flex;
  flex-direction: column;
  height: 100vh;
  overflow: hidden;
`;

const Spacer = styled.div`
  flex: 1;
`;

const BareButton = styled.button`
  display: flex;
  align-items: center;
  justify-content: center;
  padding: 0;
  border: none;
  background: none;
  white-space: nowrap;
`;

const Caret = styled.span`
  flex-shrink: 0;
  width: 0;
  height: 0;
  border: 3px solid transparent;
  border-top: 4px solid ${(p) => (p.$dark ? '#111' : p.$faint ? '#b5b5b5' : '#666')};
  border-bottom: none;
  pointer-events: none;
  ${(p) => p.$up && 'rotate: 180deg;'}
`;

const HeaderBar = styled.header`
  display: flex;
  height: 61px;
  flex-shrink: 0;
`;

const HeaderLeft = styled.div`
  display: flex;
  flex-direction: column;
  padding-right: 3px;
`;

const QuickAccess = styled.div`
  display: flex;
  align-items: center;
  height: 31px;
  padding: 0 0 4px 1px;
`;

const QuickDivider = styled.span`
  width: 1px;
  height: 18px;
  margin: 0 3px;
  background: #9a9ca0;
`;

const QuickButton = styled(BareButton)`
  width: ${(p) => p.$w}px;
  height: 24px;
`;

const Tabs = styled.nav`
  display: flex;
  height: 30px;
`;

const FileTab = styled(BareButton)`
  width: 70px;
  margin-right: 4px;
  color: #fff;
  border: 1px solid #c02f16;
  border-bottom: none;
  border-radius: 4px 4px 0 0;
  background: radial-gradient(ellipse 60% 50% at 50% 105%, #ffa53c, transparent),
    linear-gradient(#ef7452, #e14e2a 50%, #e85a2a);
`;

const Tab = styled(BareButton)`
  padding: 0 14px;
  ${(p) =>
    p.$active &&
    css`
      position: relative;
      z-index: 1;
      width: 56px;
      height: 31px;
      padding: 0;
      margin-right: 1px;
      border: 1px solid #b4b6ba;
      border-bottom: none;
      border-radius: 4px 4px 0 0;
      background: #fff;
    `}
`;

const ContextGroup = styled.div`
  display: flex;
  flex-direction: column;
  width: 72px;
  margin-right: 4px;
  border: 1px solid;
  border-width: 4px 1px 0;
  border-image: linear-gradient(${(p) => `${p.$main} 4px, ${p.$edge} 30px, transparent`}) 4 1 0 1;
  background: linear-gradient(${(p) => `${p.$top}, ${p.$top} 26px, ${p.$mid} 27px, #fff 54px`});
`;

const ContextTitle = styled.div`
  height: 26px;
  line-height: 26px;
  text-align: center;
  white-space: nowrap;
  font-weight: 700;
  color: #fff;
  text-shadow: 0 1px 2px ${(p) => p.$shadow};
`;

const ContextTab = styled(BareButton)`
  height: 31px;
`;

const HeaderRight = styled.div`
  flex: 1;
  min-width: 0;
`;

const TitleRow = styled.div`
  display: flex;
  height: 33px;
  padding-right: 3px;
`;

const Title = styled.h1`
  flex: 1;
  margin: 0 0 0 1px;
  overflow: hidden;
  font-size: 16px;
  font-weight: 350;
  line-height: 31px;
  white-space: nowrap;
  color: #000;
`;

const WindowButton = styled(BareButton)`
  width: 58px;
  height: 36px;
`;

const HelpRow = styled.div`
  display: flex;
  align-items: center;
  justify-content: flex-end;
  gap: 13px;
  height: 24px;
  padding-right: 5px;
`;

const HelpButton = styled(BareButton)`
  width: 16px;
  height: 16px;
  border-radius: 50%;
  font-size: 13px;
  font-weight: 700;
  line-height: 16px;
  color: #fff;
  background: radial-gradient(#5f9be2, #2a5fb4);
`;

const RibbonBar = styled.section`
  display: flex;
  height: 118px;
  flex-shrink: 0;
  border-top: 1px solid #b4b6ba;
  border-bottom: 1px solid #85898f;
  background: linear-gradient(#fff 50%, #e9ecf1);
`;

const Group = styled.div`
  display: flex;
  flex-direction: column;
  flex-shrink: 0;
  border-right: 1px solid;
  border-image: linear-gradient(#f2f3f4, #b2b5ba 60%) 1;
  box-shadow: 1px 0 0 #fff;
`;

const GroupBody = styled.div`
  display: flex;
  height: 92px;
  padding: 0 ${(p) => p.$end || 0}px 0 ${(p) => p.$pad || 0}px;
`;

const GroupLabel = styled.div`
  position: relative;
  height: 24px;
  line-height: 24px;
  padding-right: ${(p) => (p.$launcher ? 22 : 0)}px;
  text-align: center;
  color: #5f656e;
`;

const LauncherButton = styled(BareButton)`
  position: absolute;
  right: 5px;
  bottom: 7px;
`;

const LargeButton = styled(BareButton)`
  flex-direction: column;
  justify-content: flex-start;
  width: ${(p) => p.$w}px;
  padding-top: 9px;

  svg {
    margin-bottom: 7px;
  }
`;

const LineCaret = styled.span`
  display: flex;
  align-items: center;
  gap: 4px;
  height: 20px;
`;

const Column = styled.div`
  display: flex;
  flex-direction: column;
  align-items: flex-start;
  padding-top: ${(p) => (p.$pad ? 3 : 2)}px;
`;

const CommandButton = styled(BareButton)`
  gap: ${(p) => (p.$tall ? 5 : 4)}px;
  height: ${(p) => (p.$tall ? 29 : 26)}px;
  padding: 0 6px 0 4px;

  &:disabled {
    color: #909090;
  }

  ${Caret} {
    margin-left: 2px;
  }
`;

const ToolRows = styled.div`
  display: flex;
  flex-direction: column;
  gap: 14px;
  height: 92px;
  padding: 13px 2px 0 4px;
`;

const ToolRow = styled.div`
  display: flex;
  align-items: center;
  height: 26px;
`;

const Combo = styled.label`
  display: flex;
  align-items: center;
  width: ${(p) => p.$w}px;
  height: 30px;
  padding: 0 5px 0 2px;
  border: 1px solid #cfd2d6;

  select {
    flex: 1;
    min-width: 0;
    padding: 0;
    border: none;
    outline: none;
    appearance: none;
    background: none;
    color: #000;
  }
`;

const Tool = styled(BareButton)`
  gap: ${(p) => (p.$w ? 6 : 0)}px;
  width: ${(p) => p.$w || 28}px;
  height: 26px;
  font-family: 'Liberation Serif', serif;
  font-size: ${(p) => p.$size || 15}px;
  font-weight: 700;
  border-radius: 3px;
  ${(p) =>
    p.$active &&
    css`
      border: 1px solid #c29b3c;
      background: linear-gradient(#fbd76f, #fdd458 50%, #fff08a);
    `}
`;

const Shadowed = styled.span`
  text-shadow: 2px 1px 2px #888;
`;

const Divider = styled.span`
  width: ${(p) => p.$w || 6}px;
  height: 20px;
  background: linear-gradient(#d4d6d9, #d4d6d9) center / 1px 100% no-repeat;
`;

const Gallery = styled.div`
  display: flex;
  width: 163px;
  height: 75px;
  margin-top: 5px;
  border: 1px solid #c3c7cc;
`;

const GalleryGrid = styled.div`
  display: grid;
  grid-template-columns: repeat(6, 24px);
  grid-auto-rows: 24px;
  flex: 1;
`;

const GalleryScroll = styled.div`
  display: flex;
  flex-direction: column;
  width: 17px;
  border-left: 1px solid #c3c7cc;
`;

const GalleryButton = styled(BareButton)`
  flex: 1;
  background: ${(p) => (p.$off ? '#ececec' : '#fafafa')};

  & + & {
    border-top: 1px solid #c3c7cc;
  }
`;

const ReplaceIcon = styled.span`
  display: flex;
  flex-direction: column;
  width: 16px;
  font-size: 8px;
  font-weight: 700;
  line-height: 11px;
  text-align: left;

  em {
    font-style: normal;
    text-align: right;
    color: #1c7a1c;
  }
`;

const Workspace = styled.main`
  display: flex;
  flex: 1;
  min-height: 0;
  background: #eef0f2;
`;

const Panel = styled.aside`
  display: flex;
  flex-direction: column;
  width: 300px;
  margin-right: 4px;
  padding-top: 2px;
  border-right: 1px solid #8b9097;
  background: linear-gradient(#cfd2d7, #b9bcc1);
`;

const PanelTabs = styled.div`
  display: flex;
  height: 28px;
  border-top: 1px solid #8b9097;
  background: linear-gradient(#c3c8cd, #b3b8bd);
  box-shadow: inset 0 -1px 0 #8b9097;
`;

const PanelTab = styled(BareButton)`
  width: 69px;
  border-right: 1px solid #8b9097;
  color: #4c5056;
  ${(p) =>
    p.$active &&
    css`
      color: #333;
      background: linear-gradient(#dfe2e6, #cdd0d5);
    `}
`;

const PanelClose = styled(BareButton)`
  width: 26px;
  margin-left: auto;
`;

const ThumbList = styled.div`
  display: flex;
  flex-direction: column;
  gap: 3px;
  padding: 3px 5px 0 3px;
`;

const ThumbItem = styled.div`
  display: flex;
  justify-content: space-between;
  padding: 5px 5px 5px 7px;
  border: 1px solid transparent;
  border-radius: 3px;
  ${(p) =>
    p.$selected &&
    css`
      border-color: #f0cb50;
      background: linear-gradient(#fff1b8, #fee081 35%, #fddf80 50%, #fff8d0 80%, #fffce8);
      box-shadow: inset 0 0 0 1px #fffbe0;
    `}
`;

const ThumbNumber = styled.span`
  font-family: 'Noto Sans CJK SC', sans-serif;
  font-weight: 400;
  line-height: 22px;
  color: #222;
`;

const Thumb = styled.div`
  position: relative;
  width: 259px;
  height: 195px;
  overflow: hidden;
  border: 1px solid #868a91;
  background: #fff;
  box-shadow: 0 0 5px #70757d;
  font-family: ${SONG};
  font-size: 6px;
  line-height: 8px;
`;

const EditorColumn = styled.div`
  display: flex;
  flex: 1;
  flex-direction: column;
  min-width: 0;
  border-left: 1px solid #8b9097;
`;

const CanvasRow = styled.div`
  display: flex;
  flex: 1;
  min-height: 0;
  border-bottom: 1px solid #8b9097;
  background: linear-gradient(#cdd0d5, #b9bcc0);
`;

const Canvas = styled.div`
  display: flex;
  flex: 1;
  justify-content: center;
  align-items: flex-start;
  min-width: 0;
  padding: 21px 1px 0 0;
`;

const Slide = styled.div`
  position: relative;
  flex-shrink: 0;
  width: 980px;
  height: 735px;
  background: #fff;
  box-shadow: 0 0 1px 1px #8f949b, 2px 3px 10px 2px #84888f;
  font-family: ${SONG};
  font-size: 25px;
  font-weight: 300;
  line-height: 30px;
`;

const Circle = styled.div`
  position: absolute;
  display: flex;
  align-items: center;
  justify-content: center;
  border: ${(p) => (p.$thin ? 1 : 3)}px solid #385d8a;
  border-radius: 50%;
  color: #fff;
  background: #4f81bd;
`;

const TextBox = styled.div`
  position: absolute;
  display: flex;
  align-items: center;
  justify-content: center;
  color: #000;
  ${(p) => p.$selected && 'padding-right: 3px; border: 1px solid #44709d;'}
`;

const Handle = styled.span`
  position: absolute;
  left: ${(p) => p.$x};
  top: ${(p) => p.$y};
  width: ${(p) => (p.$round ? 10 : 8)}px;
  height: ${(p) => (p.$round ? 10 : 8)}px;
  border: 1px solid ${(p) => (p.$round ? '#56646e' : '#44709d')};
  border-radius: ${(p) => (p.$round ? '50%' : 0)};
  background: linear-gradient(#f2fdff, #c5eaf0);
  translate: -50% -50%;
`;

const RotateHandle = styled.span`
  position: absolute;
  left: 50%;
  bottom: 100%;
  width: 1px;
  height: 24px;
  margin-left: -1px;
  background: #44709d;

  &::before {
    content: '';
    position: absolute;
    left: -5px;
    top: -6px;
    width: 10px;
    height: 10px;
    border: 1px solid #4c6a3c;
    border-radius: 50%;
    background: linear-gradient(#b8f070, #74dc2c);
  }
`;

const ScrollBar = styled.div`
  display: flex;
  flex-direction: column;
  width: 20px;
  padding-top: ${(p) => (p.$short ? 0 : 3)}px;
  background: linear-gradient(90deg, #d0d5de, #dfe3ec);
`;

const ScrollButton = styled(BareButton)`
  width: 19px;
  height: 22px;
`;

const Triangle = styled.span`
  border: 5px solid transparent;
  border-top: 6px solid ${(p) => p.$color};
  border-bottom: none;
  ${(p) => p.$up && 'rotate: 180deg;'}
`;

const ScrollTrack = styled.div`
  display: flex;
  flex: 1;
  flex-direction: column;
  justify-content: flex-end;
`;

const ScrollThumb = styled.div`
  width: 19px;
  height: 50%;
  border: 1px solid #868e99;
  border-radius: 2px;
  background: repeating-linear-gradient(#8b9097 0 1px, transparent 1px 2px) center / 8px 7px no-repeat,
    linear-gradient(90deg, #f7f9fc, #dce0e5 80%, #c6ccd4);
`;

const SlideJump = styled.div`
  display: flex;
  flex-direction: column;
  gap: 7px;
  height: 61px;
  padding-top: 4px;
  border-top: 1px solid #aeb2b9;
`;

const NotesRow = styled.div`
  display: flex;
  height: 45px;
  margin-top: 4px;
  border-top: 1px solid #8b9097;
  background: #fff;
`;

const Notes = styled.textarea`
  flex: 1;
  padding: 8px 13px;
  border: none;
  outline: none;
  resize: none;
  overflow: hidden;
  font-family: ${SONG};
  font-size: 20px;
  font-weight: 300;
  line-height: 26px;

  &::placeholder {
    color: #000;
    opacity: 1;
  }
`;

const Status = styled.footer`
  display: flex;
  align-items: center;
  height: 27px;
  flex-shrink: 0;
  padding-right: 4px;
  border-top: 2px solid #8f94a2;
  border-bottom: 1px solid #b5b8bc;
  background: linear-gradient(#e2e5ea, #bcc0c5);
`;

const StatusItem = styled(BareButton)`
  justify-content: ${(p) => (p.$center ? 'center' : 'flex-start')};
  gap: 16px;
  width: ${(p) => p.$w}px;
  height: 24px;
  padding-left: ${(p) => (p.$center ? 0 : 8)}px;
  border-right: 1px solid #8e939b;
`;

const ViewButtons = styled.div`
  display: flex;
  height: 24px;
  padding-left: 4px;
  border-left: 1px solid #8e939b;
`;

const ViewButton = styled(BareButton)`
  width: 23px;
  border-radius: 2px;
  ${(p) =>
    p.$active &&
    css`
      border: 1px solid #c29b3c;
      background: linear-gradient(#fde08a, #fbcf52);
    `}
`;

const ZoomLabel = styled.span`
  padding: 0 8px 0 10px;
`;

const RoundButton = styled(BareButton)`
  width: 20px;
  height: 20px;
  border: 1px solid #7d828a;
  border-radius: 50%;
  background: linear-gradient(#fff, #e1e4e8);
`;

const ZoomSlider = styled.input`
  width: 125px;
  height: 20px;
  margin: 0;
  appearance: none;
  background: linear-gradient(#8d949f, #8d949f) center / 100% 1px no-repeat,
    linear-gradient(#8d949f, #8d949f) 50% 50% / 1px 8px no-repeat;

  &::-webkit-slider-thumb {
    appearance: none;
    width: 11px;
    height: 16px;
    border: 1px solid #6d7178;
    border-radius: 2px 2px 6px 6px;
    background: linear-gradient(#fff, #dfe2e6);
  }
`;

const FitButton = styled(BareButton)`
  width: 20px;
  height: 20px;
  margin-left: 9px;
  border: 1px solid #666;
  border-radius: 3px;
  background: #dcdee2;
`;

const TaskbarRow = styled.footer`
  display: flex;
  height: 50px;
  flex-shrink: 0;
  color: #111;
  background: linear-gradient(
    90deg,
    #d6d6d6 28%,
    #e8d9d3 37%,
    #e8dad3 50%,
    #e3d2cf 78%,
    #d9d7d6 83%,
    #e0d3d1 93%,
    #d9d9d9 98%
  );
`;

const StartButton = styled(BareButton)`
  width: 61px;
`;

const SearchBox = styled.label`
  display: flex;
  align-items: center;
  gap: 13px;
  width: 428px;
  padding: 0 13px;
  border: 1px solid #cfcfcf;
  background: #fff;

  input {
    flex: 1;
    min-width: 0;
    padding: 0;
    border: none;
    outline: none;
    font-size: 19px;
    line-height: 28px;
  }

  input::placeholder {
    color: #222;
    opacity: 1;
  }
`;

const TaskButton = styled(BareButton)`
  width: 62px;
  background: ${(p) => (p.$active ? '#f5f0ed' : 'none')};
  ${(p) =>
    p.$open &&
    css`
      box-shadow: inset 0 -3px 0 #0078d7;
      ${!p.$active && 'width: 52px; margin: 0 5px;'}
    `}
`;

const Tray = styled.div`
  display: flex;
  align-items: center;
  gap: 10px;
`;

const ImeMode = styled(BareButton)`
  width: 20px;
  height: 20px;
  margin-right: 26px;
  border: 1px solid #444;
  background: #fff;
`;

const BatteryGauge = styled.div`
  width: 43px;
  height: 22px;
  margin-right: 8px;
  padding: 2px;
  border: 1px solid #777;
  border-radius: 3px;
  background: #fff;
  box-shadow: 2px 0 0 -1px #fff;
`;

const BatteryLevel = styled.div`
  height: 16px;
  font-size: 13px;
  font-weight: 400;
  line-height: 16px;
  text-align: center;
  color: #fff;
  background: linear-gradient(90deg, #199444 78%, #8d8d8d 78%);
`;

const ImeButton = styled(BareButton)`
  font-size: 20px;
  font-weight: 500;
  line-height: 26px;
`;

const Clock = styled.time`
  display: flex;
  flex-direction: column;
  align-items: center;
  width: 78px;
  font-weight: 400;
  line-height: 23px;
`;

const Notifications = styled(BareButton)`
  position: relative;
  width: 38px;
  height: 36px;
  margin: 0 2px 0 8px;
`;

const Badge = styled.span`
  position: absolute;
  right: 0;
  bottom: 0;
  width: 27px;
  height: 20px;
  border: 1px solid #777;
  border-radius: 10px;
  font-weight: 700;
  line-height: 18px;
  background: rgba(217, 217, 217, 0.8);
`;

const ShowDesktop = styled(BareButton)`
  width: 6px;
  height: 50px;
  border-left: 1px solid #a5a5a5;
`;
